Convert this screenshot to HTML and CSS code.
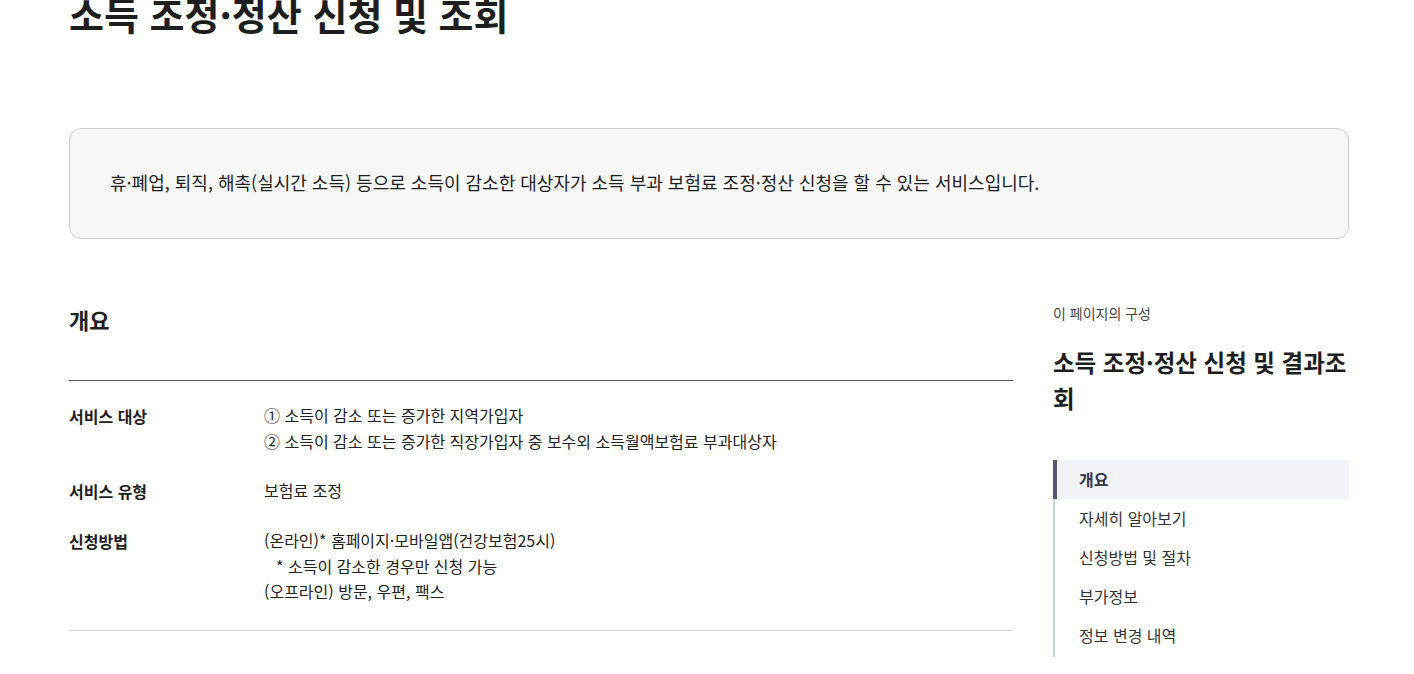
FILE: index.html
```html
<!DOCTYPE html>
<html lang="ko">
<head>
<meta charset="utf-8">
<title>소득 조정·정산 신청 및 조회</title>
<link rel="stylesheet" href="styles.css">
</head>
<body>
<div class="page">
  <h1 class="title">소득 조정·정산 신청 및 조회</h1>
  <div class="summary">휴·폐업, 퇴직, 해촉(실시간 소득) 등으로 소득이 감소한 대상자가 소득 부과 보험료 조정·정산 신청을 할 수 있는 서비스입니다.</div>
  <div class="layout">
    <main class="main">
      <h2 class="section-title">개요</h2>
      <dl class="info">
        <div class="row">
          <dt>서비스 대상</dt>
          <dd>① 소득이 감소 또는 증가한 지역가입자<br>② 소득이 감소 또는 증가한 직장가입자 중 보수외 소득월액보험료 부과대상자</dd>
        </div>
        <div class="row">
          <dt>서비스 유형</dt>
          <dd>보험료 조정</dd>
        </div>
        <div class="row">
          <dt>신청방법</dt>
          <dd>(온라인)* 홈페이지·모바일앱(건강보험25시)<br><span class="note">* 소득이 감소한 경우만 신청 가능</span><br>(오프라인) 방문, 우편, 팩스</dd>
        </div>
      </dl>
    </main>
    <aside class="side">
      <p class="side-label">이 페이지의 구성</p>
      <h3 class="side-title">소득 조정·정산 신청 및 결과조회</h3>
      <ul class="toc">
        <li class="active">개요</li>
        <li>자세히 알아보기</li>
        <li>신청방법 및 절차</li>
        <li>부가정보</li>
        <li>정보 변경 내역</li>
      </ul>
    </aside>
  </div>
</div>
</body>
</html>
```

FILE: styles.css
```css
* { box-sizing: border-box; }
html, body { margin: 0; padding: 0; background: #fff; }
body {
  font-family: "Noto Sans CJK KR", "Noto Sans", sans-serif;
  color: #1e1e1e;
  overflow: hidden;
}
.page {
  width: 1280px;
  margin-left: 69px;
}
.title {
  font-size: 38px;
  font-weight: 700;
  line-height: 52px;
  margin: -12px 0 0;
  color: #1e1e1e;
}
.summary {
  margin-top: 88px;
  background: #f7f7f7;
  border: 1px solid #cdcdcd;
  border-radius: 12px;
  padding: 38px 40px 42px;
  height: 111px;
  font-size: 18px;
  line-height: 28px;
  display: flex;
  align-items: center;
}
.layout {
  display: flex;
  gap: 40px;
  margin-top: 58px;
}
.main { width: 944px; }
.section-title {
  font-size: 22px;
  font-weight: 700;
  line-height: 32px;
  margin: 0;
  padding: 6px 0 45px;
  border-bottom: 1px solid #555;
}
.info {
  margin: 0;
  padding: 22px 0 25px;
  border-bottom: 1px solid #d6d6d6;
}
.row {
  display: flex;
  margin-bottom: 24px;
}
.row:last-child { margin-bottom: 0; }
.row dt {
  width: 195px;
  font-weight: 700;
  font-size: 16px;
  line-height: 26px;
}
.row dd {
  margin: 0;
  font-size: 16px;
  line-height: 25.5px;
  color: #222;
}
.note { padding-left: 12px; }
.side { width: 296px; }
.side-label {
  margin: 6px 0 0;
  font-size: 14px;
  line-height: 20px;
  color: #444;
}
.side-title {
  margin: 21px 0 0;
  font-size: 23.5px;
  font-weight: 700;
  line-height: 36px;
}
.toc {
  list-style: none;
  margin: 44px 0 0;
  padding: 0 0 2px;
  border-left: 2px solid #c7d2e3;
}
.toc li {
  font-size: 16px;
  line-height: 39px;
  padding-left: 24px;
  color: #333;
}
.toc li.active {
  background: #f2f3f8;
  color: #333551;
  font-weight: 700;
  margin-left: -2px;
  padding-left: 22px;
  border-left: 4px solid #545775;
}
```
